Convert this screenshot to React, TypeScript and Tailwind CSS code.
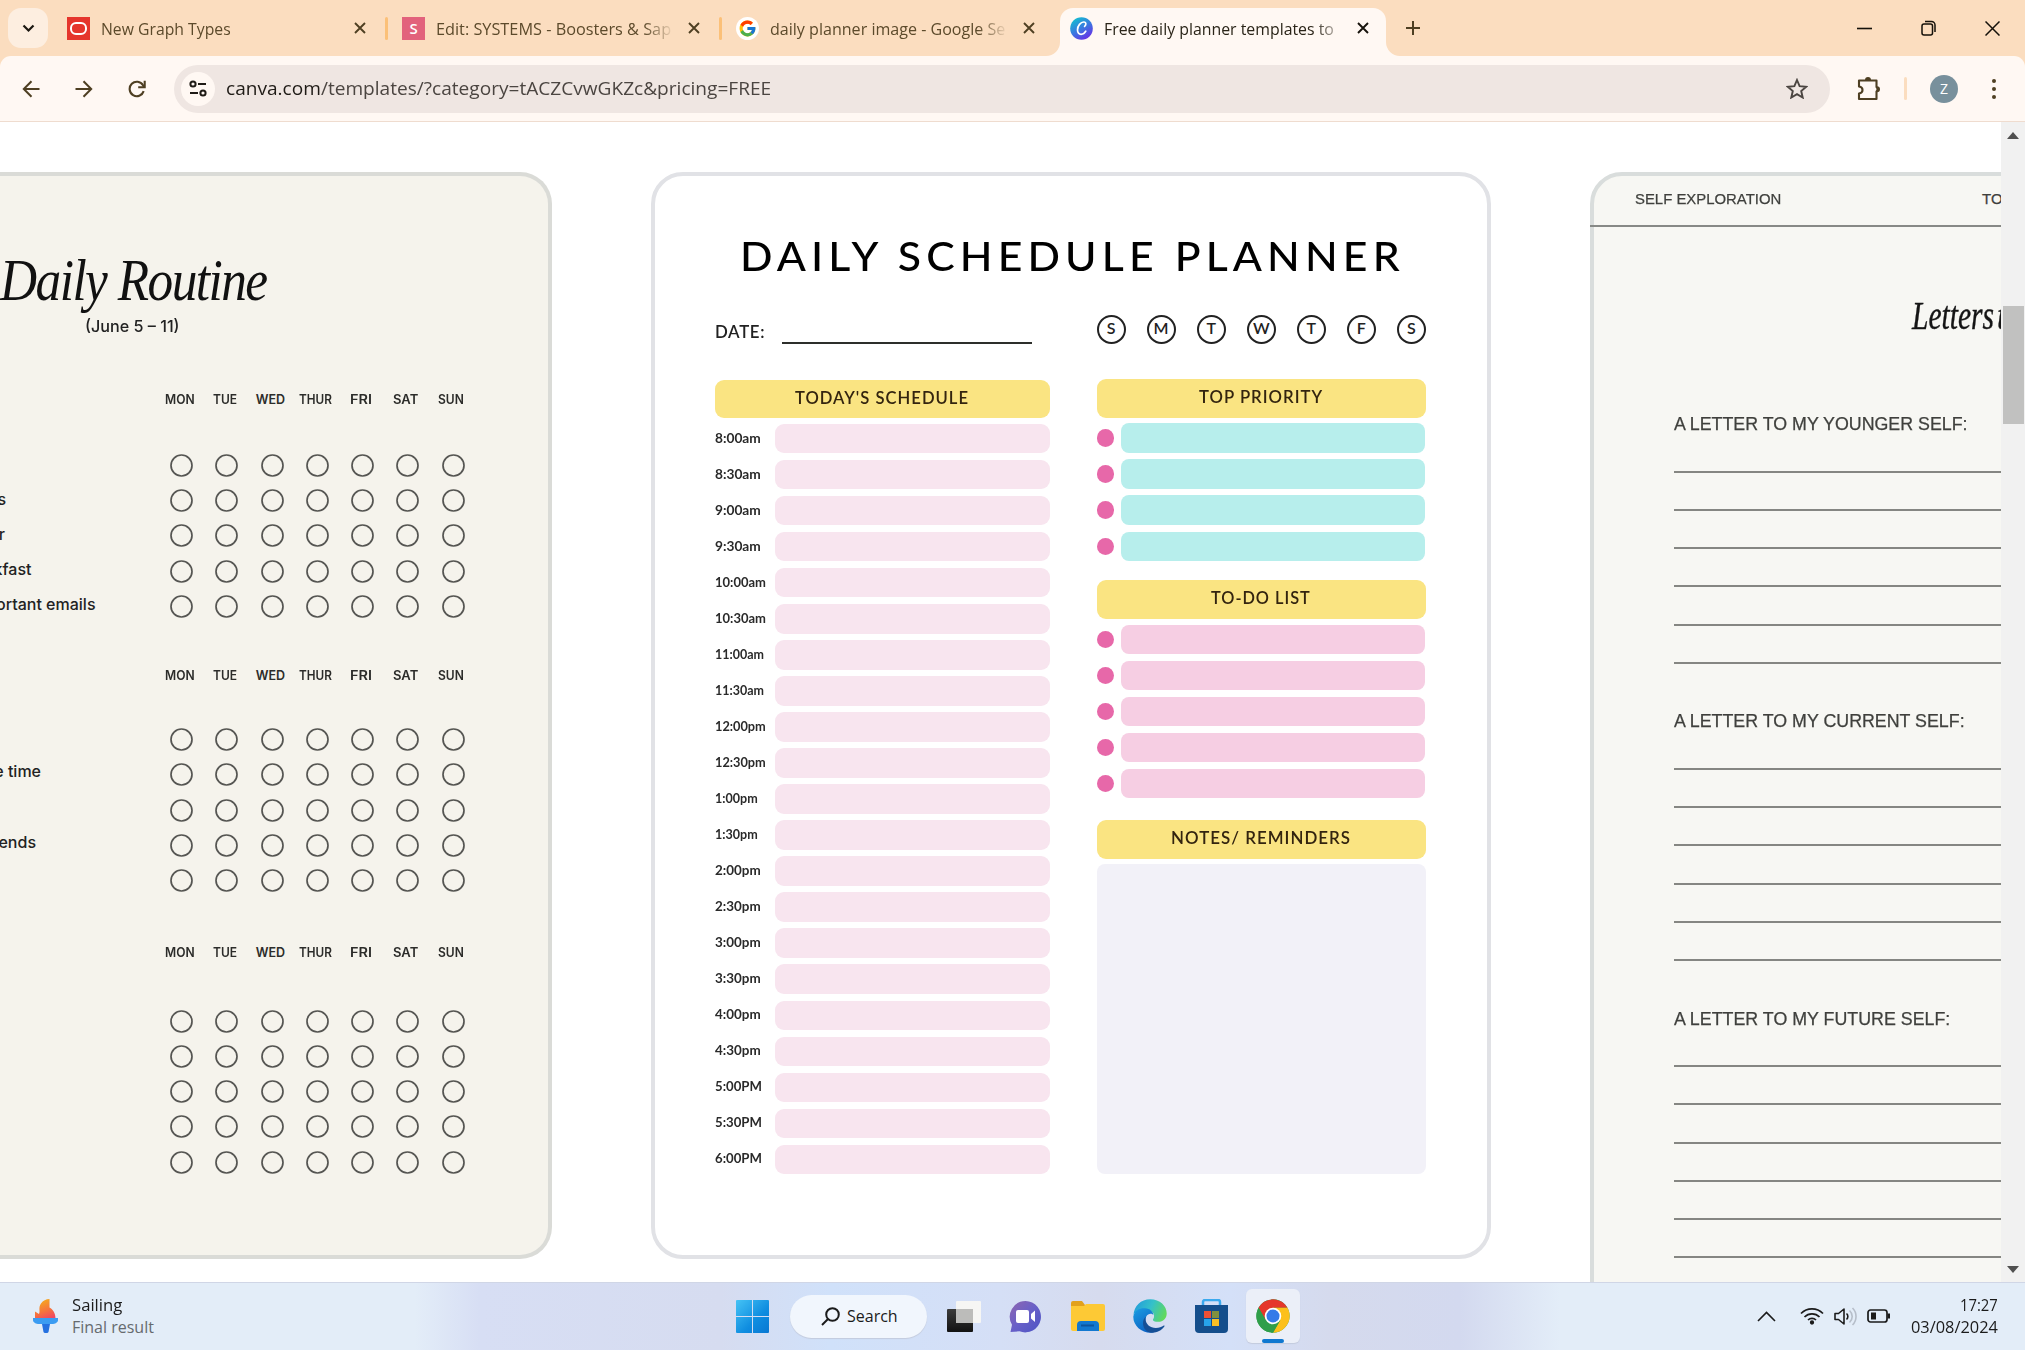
import { useLayoutEffect, useRef, useState, type ReactNode } from "react";
import { FcGoogle } from "react-icons/fc";

/** Text that is stretched or condensed to an exact width. */
function Fit({ w, className = "", children }: { w: number; className?: string; children: ReactNode }) {
  const ref = useRef<HTMLSpanElement>(null);
  const [scale, setScale] = useState(1);
  useLayoutEffect(() => {
    const el = ref.current;
    if (el && el.offsetWidth) setScale(w / el.offsetWidth);
  }, [w]);
  return (
    <span className="block shrink-0 text-left whitespace-nowrap" style={{ width: w }}>
      <span ref={ref} className={`inline-block origin-left align-top ${className}`} style={{ transform: `scaleX(${scale})` }}>
        {children}
      </span>
    </span>
  );
}

function CloseIcon({ color = "#4e3f22" }: { color?: string }) {
  return (
    <svg width="12" height="12" viewBox="0 0 12 12" className="shrink-0">
      <path d="M1 1l10 10M11 1L1 11" stroke={color} strokeWidth="1.9" fill="none" />
    </svg>
  );
}

function TabStrip() {
  return (
    <header className="flex h-14 shrink-0 items-center bg-[#fbddbf] text-[16px] text-[#5c4a2b]">
      <div className="ml-2 flex h-10 w-10 items-center justify-center rounded-[13px] bg-[#fdeee0]">
        <svg width="13" height="9" viewBox="0 0 13 9">
          <path d="M1.5 1.5l5 5 5-5" fill="none" stroke="#1b1710" strokeWidth="2.2" />
        </svg>
      </div>
      <div className="ml-[19px] flex h-[23px] w-[23px] items-center justify-center bg-[#e5352c]">
        <div className="h-[13px] w-[17px] rounded-[6px] border-[2.5px] border-white" />
      </div>
      <div className="ml-[11px] w-[253px] pt-0.5">
        <Fit w={130}>New Graph Types</Fit>
      </div>
      <CloseIcon />
      <div className="ml-[19px] h-[23px] w-[3px] rounded bg-[#fbc078]" />
      <div className="ml-[14px] flex h-[23px] w-[23px] items-center justify-center bg-[#e2627c] text-[15px] font-semibold text-white">S</div>
      <div className="ml-[11px] w-[236px] overflow-hidden pt-0.5 [mask-image:linear-gradient(to_right,black_88%,transparent_101%)]">
        <Fit w={235}>Edit: SYSTEMS - Boosters &amp; Sap</Fit>
      </div>
      <div className="ml-4"><CloseIcon /></div>
      <div className="ml-[19px] h-[23px] w-[3px] rounded bg-[#fbc078]" />
      <div className="ml-[14px] flex h-[23px] w-[23px] items-center justify-center rounded-full bg-white">
        <FcGoogle size={19} />
      </div>
      <div className="ml-[11px] w-[236px] overflow-hidden pt-0.5 [mask-image:linear-gradient(to_right,black_88%,transparent_101%)]">
        <Fit w={235}>daily planner image - Google Se</Fit>
      </div>
      <div className="ml-[17px]"><CloseIcon /></div>
      <div className="relative ml-[25px] flex h-12 w-[326px] items-center self-end rounded-t-[13px] bg-[#fff8f3] pb-2 text-[#2a2418]">
        <svg className="absolute -left-3.5 bottom-0" width="14" height="14"><path d="M14 0v14H0A14 14 0 0 0 14 0z" fill="#fff8f3" /></svg>
        <svg className="absolute -right-3.5 bottom-0" width="14" height="14"><path d="M0 0v14h14A14 14 0 0 1 0 0z" fill="#fff8f3" /></svg>
        <svg className="ml-[10px]" width="23" height="23" viewBox="0 0 23 23">
          <defs>
            <linearGradient id="canva" x1="0.2" y1="0" x2="0.8" y2="1">
              <stop offset="0" stopColor="#12c2cf" />
              <stop offset="0.5" stopColor="#3a78e0" />
              <stop offset="1" stopColor="#6d28e6" />
            </linearGradient>
          </defs>
          <circle cx="11.5" cy="11.5" r="11.3" fill="url(#canva)" />
          <path d="M14.6 9.4c1.6-1.2 1.9-4.2-.5-4.4-3.400-.3-6.700 4-6.600 8 .1 2.700 1.500 4.300 3.600 4.300 2.200 0 3.800-1.500 4.700-3.100" fill="none" stroke="#fff" strokeWidth="1.7" strokeLinecap="round" />
        </svg>
        <div className="ml-[11px] w-[230px] overflow-hidden pt-0.5 [mask-image:linear-gradient(to_right,black_91%,transparent_106%)]">
          <Fit w={230}>Free daily planner templates to</Fit>
        </div>
        <div className="ml-[23px]"><CloseIcon color="#17130c" /></div>
      </div>
      <svg className="ml-[20px]" width="14" height="14" viewBox="0 0 14 14">
        <path d="M7 0v14M0 7h14" stroke="#4e3f22" strokeWidth="2" />
      </svg>
      <div className="mr-[25px] ml-auto flex items-center text-[#15110a]">
        <svg width="15" height="15" viewBox="0 0 15 15"><path d="M0 7.500h15" stroke="currentColor" strokeWidth="1.600" /></svg>
        <svg className="ml-[49px]" width="15" height="16" viewBox="0 0 15 16" fill="none" stroke="currentColor" strokeWidth="1.500">
          <rect x="1" y="4" width="10.500" height="11" rx="2" />
          <path d="M4 1.500h6.500a3.500 3.500 0 0 1 3.500 3.500v7" />
        </svg>
        <svg className="ml-[49px]" width="15" height="15" viewBox="0 0 15 15"><path d="M.5.5l14 14M14.500.5l-14 14" stroke="currentColor" strokeWidth="1.500" /></svg>
      </div>
    </header>
  );
}

function Toolbar() {
  return (
    <div className="bg-[#fbddbf]">
      <div className="flex h-[66px] items-center rounded-t-[11px] border-b border-[#efdccf] bg-[#fff8f3] text-[#4e3f22]">
        <svg className="ml-[22px]" width="18" height="18" viewBox="0 0 18 18" fill="none" stroke="currentColor" strokeWidth="2"><path d="M17.500 9H2M9.500 1.200L1.800 9l7.700 7.800" /></svg>
        <svg className="ml-[35px]" width="18" height="18" viewBox="0 0 18 18" fill="none" stroke="currentColor" strokeWidth="2"><path d="M.5 9H16M8.500 1.200L16.200 9l-7.700 7.800" /></svg>
        <svg className="ml-[35px]" width="18" height="18" viewBox="0 0 18 18" fill="none" stroke="currentColor" strokeWidth="2.100"><path d="M15.700 11.200A7.200 7.200 0 1 1 15 5.200L16 7" /><path d="M16.700 0.800V7.300H10.200" /></svg>
        <div className="ml-7 flex h-12 w-[1656px] items-center rounded-full bg-[#efe6e2]">
          <div className="ml-[7px] flex h-[34px] w-[34px] items-center justify-center rounded-full bg-[#fff8f3]">
            <svg width="18" height="17" viewBox="0 0 18 17" fill="none" stroke="#1f1b16" strokeWidth="2">
              <circle cx="4" cy="4" r="2.600" /><path d="M9 4h8M1 13h8" /><circle cx="14" cy="13" r="2.600" />
            </svg>
          </div>
          <div className="ml-[11px] text-[18px] text-[#4b4541]">
            <Fit w={545}><span className="text-[#1f1b16]">canva.com</span>/templates/?category=tACZCvwGKZc&amp;pricing=FREE</Fit>
          </div>
          <svg className="mr-[22px] ml-auto" width="22" height="21" viewBox="0 0 22 21"><path d="M11 2l2.600 6.100 6.600.6-5 4.300 1.500 6.500L11 16.100l-5.700 3.400 1.500-6.500-5-4.300 6.600-.6z" fill="none" stroke="#4b4541" strokeWidth="1.900" /></svg>
        </div>
        <svg className="ml-[27px]" width="24" height="25" viewBox="0 0 24 25">
          <path d="M2 4.500h17.500v6.500a3 3 0 0 1 0 4.500v7.500H2v-5.500c4.700-.7 4.700-6.300 0-7z" fill="none" stroke="#4e3f22" strokeWidth="2.100" strokeLinejoin="round" />
          <path d="M8 4a3 3 0 0 1 6 0zM20 10.300a3 3 0 0 1 0 6z" fill="#4e3f22" />
        </svg>
        <div className="ml-[23px] h-[23px] w-[3px] rounded bg-[#fbddbf]" />
        <div className="ml-[23px] flex h-7 w-7 items-center justify-center rounded-full bg-[#78909c] text-[14px] text-white">Z</div>
        <div className="ml-[34px] flex flex-col gap-1">
          <i className="h-1 w-1 rounded-full bg-[#4e3f22]" />
          <i className="h-1 w-1 rounded-full bg-[#4e3f22]" />
          <i className="h-1 w-1 rounded-full bg-[#4e3f22]" />
        </div>
      </div>
    </div>
  );
}

const DAYS: [string, number][] = [["MON", 30], ["TUE", 24], ["WED", 29], ["THUR", 33], ["FRI", 22], ["SAT", 25], ["SUN", 26]];

function RoutineGroup({ labels, gap, lift = "pb-1" }: { labels: [string, number][]; gap: string; lift?: string }) {
  return (
    <div className={`flex flex-col ${gap}`}>
      <div className="ml-[157px] flex h-5 items-center font-['Inter'] text-[12.500px] leading-5 font-semibold text-[#2c2c2a]">
        {DAYS.map(([d, w]) => (
          <div key={d} className="flex w-[45.250px] justify-center"><Fit w={w}>{d}</Fit></div>
        ))}
      </div>
      <div>
        {labels.map(([text, right], i) => (
          <div key={i} className="flex h-[35.300px] items-center">
            <div className={`w-[158.900px] shrink-0 ${lift}`}>
              <div className="flex justify-end font-['Inter'] text-[16px] font-medium whitespace-nowrap text-[#222]" style={{ width: right }}>{text}</div>
            </div>
            {DAYS.map(([d]) => (
              <div key={d} className="flex w-[45.250px] shrink-0 justify-center">
                <svg width="23" height="23" viewBox="0 0 23 23"><circle cx="11.500" cy="11.500" r="10.500" fill="none" stroke="#555552" strokeWidth="1.700" /></svg>
              </div>
            ))}
          </div>
        ))}
      </div>
    </div>
  );
}

function RoutineCard() {
  return (
    <article className="h-[1087px] w-[552px] shrink-0 overflow-hidden rounded-r-[32px] border-y-4 border-r-4 border-[#dadbd7] bg-[#f5f3ec]">
      <h1 className="mt-[72px] font-['Liberation_Serif'] text-[60px] leading-[64px] tracking-[-0.030em] text-[#111] italic"><Fit w={267}>Daily Routine</Fit></h1>
      <div className="mt-[2px] mb-[52px] ml-[85px] font-['Inter'] text-[16.500px] leading-6 font-medium text-[#222]"><Fit w={95}>(June 5 – 11)</Fit></div>
      <RoutineGroup gap="gap-[37.600px]" labels={[["", 0], ["s", 6], ["r", 5], ["kfast", 31.5], ["ortant emails", 95.5]]} />
      <div className="h-[42.300px]" />
      <RoutineGroup gap="gap-[35.600px]" lift="pb-2" labels={[["", 0], ["e time", 41], ["", 0], ["ends", 36], ["", 0]]} />
      <div className="h-[44.600px]" />
      <RoutineGroup gap="gap-[40.400px]" labels={[["", 0], ["", 0], ["", 0], ["", 0], ["", 0]]} />
    </article>
  );
}

const TIMES: [string, number][] = [
  ["8:00am", 46], ["8:30am", 46], ["9:00am", 46], ["9:30am", 46], ["10:00am", 51], ["10:30am", 51], ["11:00am", 49], ["11:30am", 49],
  ["12:00pm", 51], ["12:30pm", 51], ["1:00pm", 43], ["1:30pm", 43], ["2:00pm", 46], ["2:30pm", 46], ["3:00pm", 46], ["3:30pm", 46],
  ["4:00pm", 46], ["4:30pm", 46], ["5:00PM", 47], ["5:30PM", 47], ["6:00PM", 47],
];

function Banner({ w, children, className }: { w: number; children: string; className: string }) {
  return (
    <div className={`flex justify-center rounded-[9px] bg-[#fae482] text-[17px] font-semibold tracking-[0.060em] text-[#33240f] ${className}`}>
      <Fit w={w}>{children}</Fit>
    </div>
  );
}

function Bullets({ count, bar }: { count: number; bar: string }) {
  return (
    <div className="mt-[5.500px] flex flex-col gap-[6.550px]">
      {Array.from({ length: count }, (_, i) => (
        <div key={i} className="flex h-[29.500px] items-center">
          <div className="h-[17.500px] w-[17.500px] rounded-full bg-[#e768a9]" />
          <div className={`ml-[7px] h-full w-[303.500px] rounded-[8px] ${bar}`} />
        </div>
      ))}
    </div>
  );
}

function PlannerCard() {
  return (
    <article className="h-[1087px] w-[840px] shrink-0 rounded-[32px] border-4 border-[#e1e2e6] bg-white font-['Lato']">
      <h1 className="mt-[57px] ml-[84.500px] text-[40px] leading-[46px] font-medium tracking-[0.120em] text-black"><Fit w={665}>DAILY SCHEDULE PLANNER</Fit></h1>
      <div className="mt-[1.400px] ml-[60px] flex w-[711px] justify-between">
        <section className="w-[334.500px]">
          <div className="flex h-[99.700px] items-start pt-[40px] text-[17.500px] leading-6 font-semibold tracking-[0.040em] text-[#222]">
            <div className="w-[66.500px]"><Fit w={50}>DATE:</Fit></div>
            <div className="mt-[21.500px] h-[2.500px] w-[250px] bg-[#2d2f2b]" />
          </div>
          <Banner w={174} className="h-[38px] leading-[36px]">TODAY'S SCHEDULE</Banner>
          <div className="mt-[5.700px] flex flex-col gap-[6.550px]">
            {TIMES.map(([t, w]) => (
              <div key={t} className="flex h-[29.500px] items-center">
                <div className="w-[59.500px] pb-0.5 text-[14px] leading-5 font-bold text-[#2a2a2a]"><Fit w={w}>{t}</Fit></div>
                <div className="h-full flex-1 rounded-[9px] bg-[#f8e5ef]" />
              </div>
            ))}
          </div>
        </section>
        <section className="w-[329.500px]">
          <div className="flex h-[98.500px] justify-between pt-[34.800px]">
            {["S", "M", "T", "W", "T", "F", "S"].map((d, i) => (
              <div key={i} className="flex h-[29px] w-[29px] justify-center rounded-full border-2 border-[#222] text-[16px] leading-[22px] font-semibold text-[#222]">{d}</div>
            ))}
          </div>
          <Banner w={124} className="h-[39px] leading-[35px]">TOP PRIORITY</Banner>
          <Bullets count={4} bar="bg-[#b7eeec]" />
          <Banner w={100} className="mt-[19px] h-[39px] leading-[35px]">TO-DO LIST</Banner>
          <Bullets count={5} bar="bg-[#f6cee3]" />
          <Banner w={180} className="mt-[21.300px] h-[39px] leading-[36px]">NOTES/ REMINDERS</Banner>
          <div className="mt-[5.500px] h-[310px] rounded-[8px] bg-[#f2f1f8]" />
        </section>
      </div>
    </article>
  );
}

function LetterBlock({ title, w }: { title: string; w: number }) {
  return (
    <div className="ml-[79.500px] h-[297.200px]">
      <div className="text-[17.500px] leading-6 text-[#3f403d] [-webkit-text-stroke:0.250px_#3f403d]"><Fit w={w}>{title}</Fit></div>
      <div className="mt-[34.600px] flex flex-col gap-[36.200px]">
        {Array.from({ length: 6 }, (_, i) => <div key={i} className="h-[2px] w-[500px] bg-[#858682]" />)}
      </div>
    </div>
  );
}

function LettersCard() {
  return (
    <article className="h-[1200px] w-[840px] shrink-0 rounded-[32px] border-4 border-[#d9dddc] bg-[#f7f7f3] font-['Liberation_Sans']">
      <div className="-ml-1 flex h-[51px] border-b-2 border-[#878986] pt-[11px] pl-[45px] text-[15px] leading-6 text-[#3f403d] [-webkit-text-stroke:0.250px_#3f403d]">
        <div className="w-[347px]"><Fit w={146}>SELF EXPLORATION</Fit></div>
        <span>TODAY</span>
      </div>
      <div className="mt-[67px] ml-[318px] flex gap-[3px] font-['Liberation_Serif'] text-[40px] leading-[44px] text-[#151515] italic [-webkit-text-stroke:0.400px_#151515]">
        <Fit w={82}>Letters</Fit>
        <Fit w={26}>to</Fit>
      </div>
      <div className="h-[74.200px]" />
      <LetterBlock title="A LETTER TO MY YOUNGER SELF:" w={294} />
      <LetterBlock title="A LETTER TO MY CURRENT SELF:" w={291} />
      <LetterBlock title="A LETTER TO MY FUTURE SELF:" w={276} />
    </article>
  );
}

function Scrollbar() {
  return (
    <div className="flex w-6 shrink-0 flex-col items-center bg-[#f1f1f1]">
      <svg className="mt-2.5" width="12" height="7"><path d="M0 7L6 0l6 7z" fill="#505050" /></svg>
      <div className="mt-[167px] h-[118px] w-[21px] bg-[#c1c1c0]" />
      <svg className="mt-auto mb-[9px]" width="12" height="7"><path d="M0 0h12L6 7z" fill="#505050" /></svg>
    </div>
  );
}

function ChromeLogo() {
  return (
    <svg width="34" height="34" viewBox="0 0 48 48">
      <circle cx="24" cy="24" r="23.500" fill="#2f9e4a" />
      <path d="M24 24L3.650 12.250A23.500 23.500 0 0 1 44.350 12.250H24z" fill="#e5372b" />
      <path d="M24 12.250h20.350A23.500 23.500 0 0 1 24 47.500L34.200 29.900z" fill="#fcc01b" />
      <path d="M3.650 12.250L13.800 29.900 24 24V12.250z" fill="#e5372b" />
      <path d="M3.650 12.250L13.800 29.900l10.200 5.800 10.200-5.800L24 47.500A23.500 23.500 0 0 1 3.650 12.250z" fill="#2f9e4a" />
      <circle cx="24" cy="24" r="11.700" fill="#fff" />
      <circle cx="24" cy="24" r="9.200" fill="#357be8" />
    </svg>
  );
}

function EdgeLogo() {
  return (
    <svg width="34" height="34" viewBox="0 0 34 34">
      <defs>
        <linearGradient id="edgeTop" x1="0" y1="0.3" x2="1" y2="0.6">
          <stop offset="0" stopColor="#239ddb" /><stop offset="0.500" stopColor="#35c1c9" /><stop offset="1" stopColor="#62d95a" />
        </linearGradient>
        <linearGradient id="edgeBody" x1="0" y1="0" x2="0.6" y2="1">
          <stop offset="0" stopColor="#1b9de2" /><stop offset="1" stopColor="#0b62c4" />
        </linearGradient>
      </defs>
      <path d="M0.500 16C1 7 8 .3 17.200.3 27 .3 33.700 7 33.700 14.500c0 5-3.700 8.300-8.300 8.300-3.600 0-5.900-1.200-5.400-2.400 1.600-2 1.600-5.400-.7-7.400C14.500 9 4.500 9 .5 16z" fill="url(#edgeTop)" />
      <path d="M.3 17.500C1.500 11 7 8.900 12 9.300c5 .3 8.300 3.300 8.300 6.700-1.500-2-5.500-1.500-7 1.500-2.500 5 0 13 8 15.800C10.500 35.500 0 27.500.3 17.500z" fill="url(#edgeBody)" />
      <path d="M12.800 17.500c-1.500 7 3.700 11.500 10 11.500 3.500 0 5.700-1 8-2.500.7-.3 1 .2.700.8C28 32.500 22 34.500 17 33.500 9.500 31.500 8 22 12.800 17.500z" fill="#154f96" />
    </svg>
  );
}

function Taskbar() {
  return (
    <footer className="flex h-[68px] shrink-0 items-center border-t border-[#d0d6e6] bg-[#e3edf8] bg-[linear-gradient(90deg,#e3edf8_0px,#e3edf8_415px,#d7def4_480px,#d6dcf0_720px,#d0e1fa_830px,#d5dff6_1000px,#d6dbee_1100px,#d4e0f8_1230px,#d5daed_1330px,#d3d9ef_1460px,#e3edf8_1560px)] pb-px text-[#1b1b1b]">
      <svg className="ml-[33px]" width="25" height="34" viewBox="0 0 25 34">
        <defs>
          <linearGradient id="flame" x1="0.3" y1="0" x2="0.7" y2="1"><stop offset="0" stopColor="#f5ae1c" /><stop offset="0.600" stopColor="#f6733e" /><stop offset="1" stopColor="#ef4963" /></linearGradient>
        </defs>
        <path d="M16.500 0v8.500c3.500 2 6 5.500 6 11H2v-7l4 2.500C7.500 12 5 9 8 4.500 10 1.500 13 0 16.500 0z" fill="url(#flame)" />
        <path d="M0 19h25v2c0 2.500-3 4-6 4H6c-3 0-6-1.500-6-4z" fill="#3b9cf2" />
        <path d="M9 25h8l-1.500 8a2 2 0 0 1-1.500 1h-2a2 2 0 0 1-1.500-1z" fill="#2571e0" />
      </svg>
      <div className="ml-[14px] w-[664px] text-[16px] leading-[22.500px]">
        <Fit w={50}>Sailing</Fit>
        <Fit w={82} className="text-[#666a6e]">Final result</Fit>
      </div>
      <svg width="33" height="33" viewBox="0 0 33 33">
        <defs><linearGradient id="win" x1="0" y1="0" x2="1" y2="1"><stop offset="0" stopColor="#45c3f5" /><stop offset="0.600" stopColor="#0f8de0" /><stop offset="1" stopColor="#0877d2" /></linearGradient></defs>
        <path d="M1 0h15v16H0V1a1 1 0 0 1 1-1zM17 0h15a1 1 0 0 1 1 1v15H17zM0 17h16v16H1a1 1 0 0 1-1-1zM17 17h16v15a1 1 0 0 1-1 1H17z" fill="url(#win)" />
      </svg>
      <div className="ml-[21px] flex h-[43px] w-[137px] items-center rounded-full bg-[#f1f6fd] shadow-[0_1px_1px_#c3cbdd]">
        <svg className="ml-[31px]" width="19" height="19" viewBox="0 0 19 19" fill="none" stroke="#1b1b1b" strokeWidth="2"><circle cx="11.500" cy="7.500" r="6.300" /><path d="M7 12L1 18" /></svg>
        <div className="ml-[7px] text-[16px]"><Fit w={51}>Search</Fit></div>
      </div>
      <svg className="ml-5" width="34" height="31" viewBox="0 0 34 31">
        <defs><linearGradient id="tv" x1="0" y1="0" x2="0" y2="1"><stop offset="0" stopColor="#3c3c3c" /><stop offset="1" stopColor="#121212" /></linearGradient></defs>
        <rect x="0" y="8" width="26" height="23" rx="1" fill="url(#tv)" />
        <rect x="9" y="0" width="25" height="22" rx="1" fill="#f6f6f4" />
        <path d="M9 8h17v14H9z" fill="#bcbcba" />
      </svg>
      <svg className="ml-7" width="33" height="33" viewBox="0 0 33 33">
        <defs><linearGradient id="chat" x1="0" y1="0" x2="1" y2="1"><stop offset="0" stopColor="#8f66b0" /><stop offset="0.500" stopColor="#6860c8" /><stop offset="1" stopColor="#4c54c4" /></linearGradient></defs>
        <path d="M16.500 1a15.700 15.700 0 1 1-6 30.300L1.500 32 3 24.700A15.700 15.700 0 0 1 16.500 1z" fill="url(#chat)" />
        <rect x="7" y="10" width="13" height="13" rx="2" fill="#fff" /><path d="M22 14l4-3.500v11.500L22 18.500z" fill="#fff" />
      </svg>
      <svg className="ml-[29px]" width="34" height="30" viewBox="0 0 34 30">
        <path d="M0 2a2 2 0 0 1 2-2h9l3 4h18v8H0z" fill="#e2a11c" /><path d="M0 5h13l2-2h17a2 2 0 0 1 2 2v23a2 2 0 0 1-2 2H2a2 2 0 0 1-2-2z" fill="#fdc935" />
        <path d="M6 30v-6a4 4 0 0 1 4-4h14a4 4 0 0 1 4 4v6z" fill="#1278d0" /><path d="M10 24.500h13" stroke="#0d559f" strokeWidth="2" />
      </svg>
      <div className="ml-7"><EdgeLogo /></div>
      <svg className="ml-7" width="33" height="34" viewBox="0 0 33 34">
        <path d="M8 8V3a2 2 0 0 1 2-2h13a2 2 0 0 1 2 2v5" fill="none" stroke="#3aa9ee" strokeWidth="2.500" />
        <path d="M0 6h33v24a4 4 0 0 1-4 4H4a4 4 0 0 1-4-4z" fill="#144e8c" />
        <path d="M9 12h7v7H9z" fill="#ee5035" /><path d="M17 12h7v7h-7z" fill="#80913f" /><path d="M9 20h7v7H9z" fill="#27a3ea" /><path d="M17 20h7v7h-7z" fill="#f8bf25" />
      </svg>
      <div className="relative ml-[18px] flex h-[54px] w-[54px] items-center justify-center rounded-[6px] bg-[#ebeff8] shadow-[0_1px_1px_#c3cbdd]">
        <ChromeLogo />
        <div className="absolute bottom-0 left-4 h-1 w-[22px] rounded-full bg-[#0f78d0]" />
      </div>
      <svg className="ml-[457px]" width="19" height="11" viewBox="0 0 19 11" fill="none" stroke="#1b1b1b" strokeWidth="1.600"><path d="M1 10l8.500-8.500L18 10" /></svg>
      <svg className="ml-6" width="24" height="18" viewBox="0 0 24 18" fill="none" stroke="#1b1b1b" strokeWidth="1.700">
        <path d="M1 6.500a15.500 15.500 0 0 1 22 0M4.500 10a10.500 10.500 0 0 1 15 0M8 13a5.800 5.800 0 0 1 8 0" /><circle cx="12" cy="15.500" r="1.300" fill="#1b1b1b" />
      </svg>
      <svg className="ml-2.5" width="24" height="19" viewBox="0 0 24 19" fill="none" stroke="#1b1b1b" strokeWidth="1.600">
        <path d="M1 6.500h3.500L10 2v15l-5.500-4.500H1z" strokeLinejoin="round" /><path d="M12.500 6.500a4 4 0 0 1 0 6" /><path d="M15.500 3.500a8 8 0 0 1 0 12M18.500 1a12 12 0 0 1 0 17" stroke="#b6bec9" />
      </svg>
      <svg className="ml-[9px]" width="24" height="14" viewBox="0 0 24 14"><rect x="1" y="1" width="19" height="12" rx="2.500" fill="none" stroke="#1b1b1b" strokeWidth="1.700" /><path d="M4 3.500h5v7H4z" fill="#1b1b1b" /><path d="M20.500 4.500h2.500v5h-2.500z" fill="#1b1b1b" /></svg>
      <div className="mr-[27px] ml-auto flex flex-col items-end text-[16px] leading-[22.500px]">
        <Fit w={38}>17:27</Fit>
        <Fit w={87}>03/08/2024</Fit>
      </div>
    </footer>
  );
}

export default function App() {
  return (
    <div className="flex h-[1350px] w-[2025px] flex-col overflow-hidden bg-white font-['Open_Sans',sans-serif]">
      <TabStrip />
      <Toolbar />
      <div className="flex min-h-0 flex-1">
        <main className="flex min-w-0 flex-1 gap-[99px] overflow-hidden pt-[50px]">
          <RoutineCard />
          <PlannerCard />
          <LettersCard />
        </main>
        <Scrollbar />
      </div>
      <Taskbar />
    </div>
  );
}
